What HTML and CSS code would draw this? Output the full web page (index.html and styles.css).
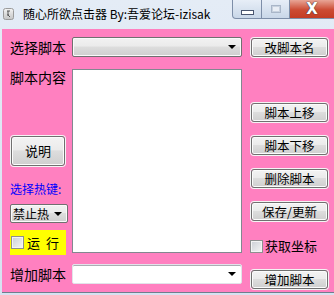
FILE: index.html
```html
<!DOCTYPE html>
<html>
<head>
<meta charset="utf-8">
<link rel="stylesheet" href="styles.css">
</head>
<body>
<div class="window">
  <div class="titlebar">
    <svg class="appicon" width="11" height="12" viewBox="0 0 11 12">
      <defs><linearGradient id="ig" x1="0" y1="0" x2="0" y2="1"><stop offset="0" stop-color="#f4f4f4"/><stop offset="1" stop-color="#c4c4c4"/></linearGradient></defs>
      <rect x="0.5" y="0.5" width="10" height="11" rx="2" fill="url(#ig)" stroke="#9a9a9a"/>
      <path d="M4 3h3M5 3v4l2 2M4 7h2" stroke="#555" stroke-width="1" fill="none"/>
    </svg>
    <span class="title">随心所欲点击器 By:吾爱论坛-izisak</span>
    <div class="caption">
      <div class="cbtn min"><span class="minbar"></span></div>
      <div class="cbtn max"><span class="maxbox"></span></div>
      <div class="cbtn close"><span class="x">X</span></div>
    </div>
  </div>
  <div class="client">
    <div class="col left">
      <div class="lbl l1">选择脚本</div>
      <div class="lbl l2">脚本内容</div>
      <div class="btn help">说明</div>
      <div class="hotlbl">选择热键:</div>
      <div class="combo hot"><span class="ctext">禁止热</span><span class="arrow"></span></div>
      <div class="runbox"><span class="chk"></span><span class="runtext">运 行</span></div>
      <div class="lbl l3">增加脚本</div>
    </div>
    <div class="col mid">
      <div class="combo sel"><span class="ctext"></span><span class="arrow"></span></div>
      <div class="textarea"></div>
      <div class="combo add"><span class="ctext"></span><span class="arrow"></span></div>
    </div>
    <div class="col right">
      <div class="btn r1">改脚本名</div>
      <div class="btn r2">脚本上移</div>
      <div class="btn r3">脚本下移</div>
      <div class="btn r4">删除脚本</div>
      <div class="btn r5">保存/更新</div>
      <div class="chkrow"><span class="chk"></span><span class="chktext">获取坐标</span></div>
      <div class="btn r7">增加脚本</div>
    </div>
  </div>
</div>
</body>
</html>
```
FILE: styles.css
```css
html, body {
  margin: 0;
  padding: 0;
  background: #dce7f4;
}
body {
  width: 334px;
  height: 295px;
  overflow: hidden;
  font-family: "Noto Sans CJK SC", "DejaVu Sans", sans-serif;
}
.window {
  width: 334px;
  height: 295px;
  background: linear-gradient(#e4ecf6, #d6e2f1);
}
.titlebar {
  height: 29px;
  display: flex;
  align-items: flex-start;
  position: relative;
}
.appicon {
  margin: 8px 0 0 3px;
}
.title {
  margin: 6px 0 0 9px;
  font-size: 12px;
  line-height: 16px;
  color: #000;
}
.caption {
  margin-left: auto;
  display: flex;
  height: 19px;
}
.cbtn {
  height: 18px;
  border: 1px solid #7d8ea8;
  border-top: none;
  display: flex;
  align-items: center;
  justify-content: center;
}
.min {
  width: 28px;
  border-radius: 0 0 0 4px;
  background: linear-gradient(#e7eef7, #c9d7e8);
}
.max {
  width: 27px;
  border-left: none;
  background: linear-gradient(#e7eef7, #c9d7e8);
}
.close {
  width: 44px;
  border-left: none;
  border-right: none;
  background: linear-gradient(#e8a596, #cc4b33 55%, #c43c24);
}
.minbar {
  width: 11px;
  height: 3px;
  margin-top: 6px;
  background: #fff;
  border: 1px solid #4a5670;
}
.maxbox {
  width: 8px;
  height: 6px;
  border: 1px solid #a9b6c8;
  background: #e9eef5;
  box-shadow: inset 0 0 0 1px #c8d2df;
}
.x {
  font-family: "DejaVu Sans", sans-serif;
  font-weight: bold;
  font-size: 15px;
  color: #fff;
  line-height: 15px;
  text-shadow: 0 0 1px #333, 0 0 1px #333;
}
.client {
  margin-left: 2px;
  width: 324px;
  height: 263px;
  background: #ff80c0;
  border-bottom: 1px solid #707d8c;
  display: flex;
  padding-left: 8px;
  box-sizing: content-box;
}
.col {
  display: flex;
  flex-direction: column;
}
.left { width: 56px; }
.mid { width: 170px; margin-left: 6px; }
.right { width: 79px; margin-left: 8px; }
.lbl {
  font-size: 14px;
  color: #000;
  white-space: nowrap;
}
.l1 { margin-top: 8px; height: 20px; line-height: 20px; }
.l2 { margin-top: 11px; height: 18px; line-height: 18px; }
.l3 { margin-top: 9px; height: 20px; line-height: 20px; }
.btn {
  box-sizing: border-box;
  border: 1px solid #707070;
  border-radius: 3px;
  background: linear-gradient(#f3f3f3 0%, #ebebeb 45%, #dddddd 50%, #cfcfcf 100%);
  box-shadow: inset 0 0 0 1px #fbfbfb, 0 0 0 1px #f4f4f4;
  font-size: 12.5px;
  color: #000;
  text-align: center;
  white-space: nowrap;
  margin-left: 1px;
  margin-right: 1px;
}
.right .btn { width: 77px; height: 19px; line-height: 17px; }
.help {
  margin-top: 50px;
  width: 54px;
  height: 30px;
  line-height: 28px;
  font-size: 13px;
}
.r1 { margin-top: 9px; }
.r2 { margin-top: 46px; }
.r3 { margin-top: 14px; }
.r4 { margin-top: 14px; }
.r5 { margin-top: 14px; }
.r7 { margin-top: 16px; }
.hotlbl {
  margin-top: 15px;
  height: 16px;
  line-height: 16px;
  font-size: 12px;
  color: #0000ff;
  white-space: nowrap;
}
.combo {
  box-sizing: border-box;
  display: flex;
  align-items: center;
  border: 1px solid #707070;
  border-radius: 2px;
  background: linear-gradient(#f2f2f2 0%, #ebebeb 45%, #dddddd 50%, #cfcfcf 100%);
  box-shadow: inset 0 0 0 1px #fafafa;
}
.ctext {
  flex: 1;
  font-size: 12px;
  line-height: 17px;
  padding-left: 2px;
  white-space: nowrap;
}
.arrow {
  width: 0;
  height: 0;
  border-left: 4px solid transparent;
  border-right: 4px solid transparent;
  border-top: 4px solid #000;
  margin-right: 5px;
}
.sel { margin-top: 8px; height: 20px; }
.hot { margin-top: 7px; height: 19px; width: 58px; }
.add {
  margin-top: 11px;
  height: 20px;
  background: #fff;
  border-color: #e2e3ea;
  box-shadow: inset 0 1px 0 #abadb3;
}
.textarea {
  margin-top: 12px;
  height: 184px;
  box-sizing: border-box;
  background: #fff;
  border: 1px solid #828790;
}
.runbox {
  margin-top: 7px;
  height: 25px;
  width: 56px;
  background: #ffff00;
  display: flex;
  align-items: center;
}
.chk {
  box-sizing: border-box;
  width: 13px;
  height: 13px;
  border: 1px solid #8e8f8f;
  background: linear-gradient(135deg, #cbcfd5, #f6f6f6);
  box-shadow: inset 0 0 0 1px #f4f4f4;
  flex: none;
}
.runbox .chk { margin-left: 1px; }
.runtext {
  margin-left: 3px;
  font-size: 13px;
  line-height: 16px;
  white-space: nowrap;
  word-spacing: 3px;
}
.chkrow {
  margin-top: 17px;
  height: 16px;
  display: flex;
  align-items: center;
}
.chktext {
  margin-left: 2px;
  font-size: 13px;
  line-height: 16px;
  white-space: nowrap;
}
```
